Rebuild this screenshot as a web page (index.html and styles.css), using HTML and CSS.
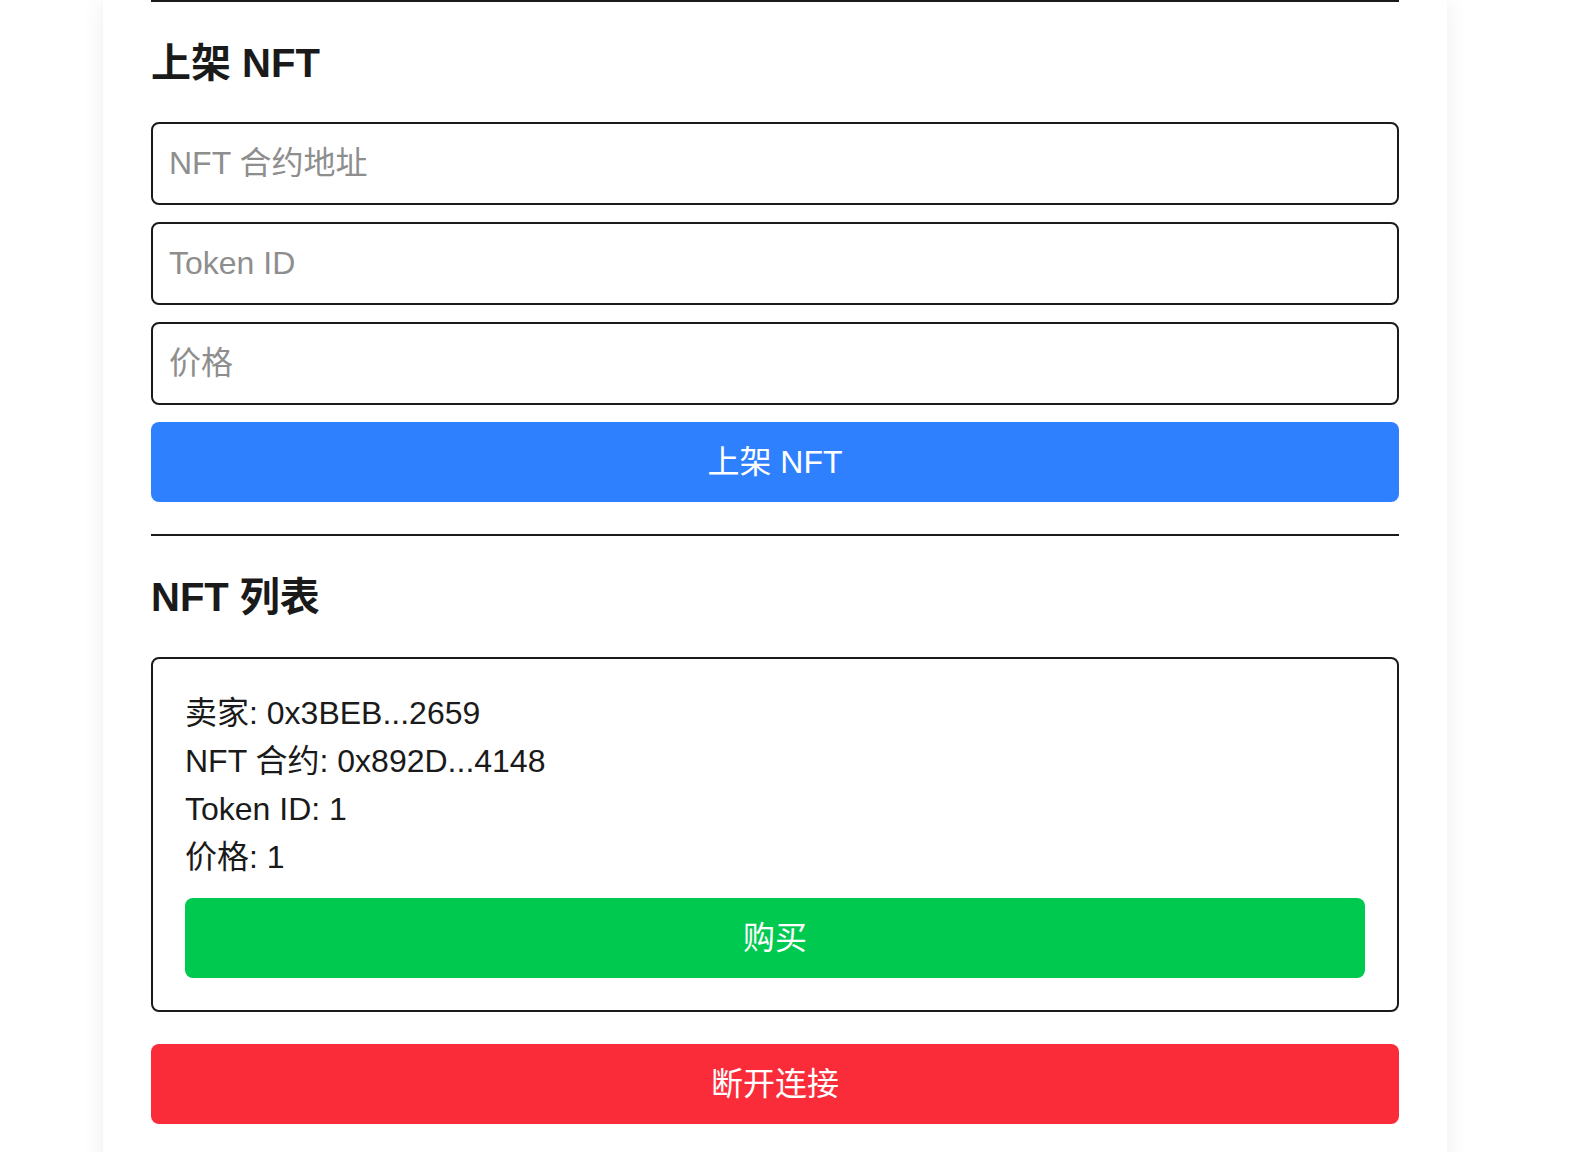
FILE: index.html
```html
<!DOCTYPE html>
<html lang="zh-CN">
<head>
<meta charset="utf-8">
<title>NFT 市场</title>
<link rel="stylesheet" href="styles.css">
</head>
<body>
<div class="card">
  <hr class="rule">
  <h2 class="section-title">上架 NFT</h2>
  <form class="list-form">
    <input class="field" type="text" placeholder="NFT 合约地址">
    <input class="field" type="text" placeholder="Token ID">
    <input class="field" type="text" placeholder="价格">
    <button class="btn btn-primary" type="button">上架 NFT</button>
  </form>
  <hr class="rule rule-mid">
  <h2 class="section-title section-title-list">NFT 列表</h2>
  <div class="nft-item">
    <p class="nft-line">卖家: 0x3BEB...2659</p>
    <p class="nft-line">NFT 合约: 0x892D...4148</p>
    <p class="nft-line">Token ID: 1</p>
    <p class="nft-line">价格: 1</p>
    <button class="btn btn-buy" type="button">购买</button>
  </div>
  <button class="btn btn-danger" type="button">断开连接</button>
</div>
</body>
</html>
```
FILE: styles.css
```css
html, body {
  margin: 0;
  padding: 0;
  background: #ffffff;
}

body {
  font-family: "Liberation Sans", "Noto Sans CJK SC", sans-serif;
  color: #1a1a1a;
}

.card {
  box-sizing: border-box;
  width: 1344px;
  margin-left: 103px;
  padding: 0 48px 48px;
  background: #ffffff;
  box-shadow: 0 0 22px rgba(0, 0, 0, 0.07);
}

.rule {
  border: 0;
  border-top: 2px solid #1a1a1a;
  margin: 0;
}

.rule-mid {
  margin-top: 32px;
}

.section-title {
  font-size: 40px;
  line-height: 48px;
  font-weight: 700;
  margin: 36.5px 0 35.5px;
  color: #1a1a1a;
}

.section-title-list {
  margin-bottom: 36px;
}

.list-form {
  display: flex;
  flex-direction: column;
  gap: 17.5px;
}

.field {
  box-sizing: border-box;
  height: 82.5px;
  width: 100%;
  border: 2px solid #1a1a1a;
  border-radius: 8px;
  padding: 0 16px;
  font-family: "Liberation Sans", "Noto Sans CJK SC", sans-serif;
  font-size: 32px;
  color: #1a1a1a;
  background: #fff;
  outline: none;
}

.field::placeholder {
  color: #8e8e8e;
}

.btn {
  display: block;
  box-sizing: border-box;
  width: 100%;
  height: 80px;
  border: 0;
  border-radius: 8px;
  color: #ffffff;
  font-family: "Liberation Sans", "Noto Sans CJK SC", sans-serif;
  font-size: 32px;
  line-height: 80px;
  padding: 0;
  cursor: pointer;
}

.btn-primary {
  background: #2f80ff;
}

.btn-buy {
  background: #00c950;
  margin-top: 17px;
}

.btn-danger {
  background: #fb2c3a;
  margin-top: 32px;
}

.nft-item {
  border: 2px solid #1a1a1a;
  border-radius: 8px;
  padding: 30px 32px 32px;
}

.nft-line {
  margin: 0;
  font-size: 32px;
  line-height: 48px;
  color: #1a1a1a;
}
```
